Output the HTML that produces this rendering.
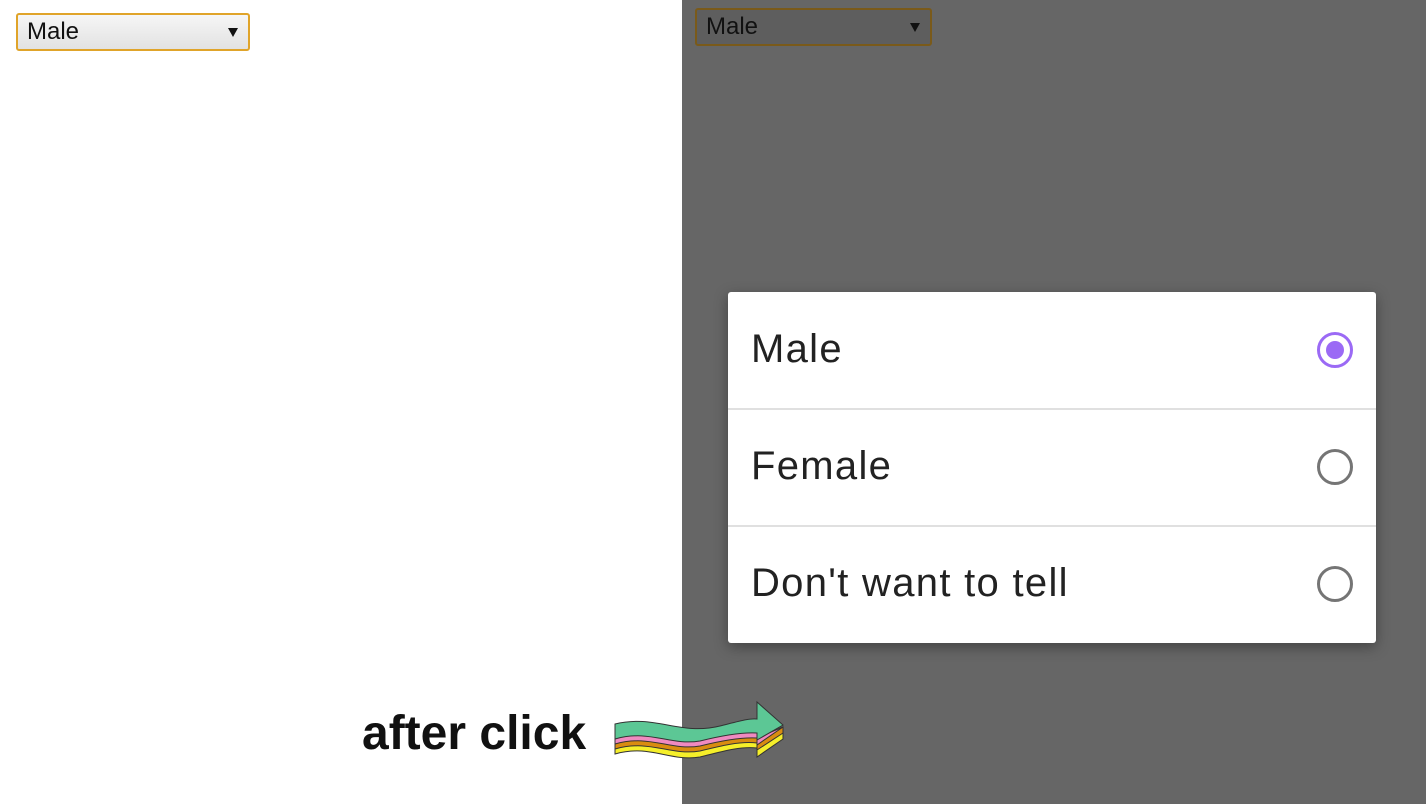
<!DOCTYPE html>
<html><head><style>
body{margin:0;width:1426px;height:804px;position:relative;background:#fff;font-family:"Liberation Sans",Roboto,sans-serif;overflow:hidden}
.sel{position:absolute;box-sizing:border-box;border:2px solid #e0a42a;border-radius:3px;background:linear-gradient(#f6f6f6,#e2e2e2);font-size:24px;color:#111}
.sel span{position:absolute;left:9px;top:3px}
.sel i{position:absolute;right:10px;top:13px;width:0;height:0;border-left:5px solid transparent;border-right:5px solid transparent;border-top:9px solid #111}
#gray{position:absolute;left:682px;top:0;width:744px;height:804px;background:#666}
#dlg{position:absolute;left:728px;top:292px;width:648px;height:351px;background:#fff;border-radius:3px;box-shadow:0 4px 14px rgba(0,0,0,.35)}
.row{position:absolute;left:0;width:648px;height:117px;font-size:40px;letter-spacing:1.3px;color:#222}
.row span{position:absolute;left:23px;top:35px}
.row .r{position:absolute;left:589px;top:40px;width:30px;height:30px;border:3px solid #757575;border-radius:50%}
.hr{position:absolute;left:0;width:648px;height:2px;background:#e0e0e0}
</style></head><body>
<div class="sel" style="left:16px;top:13px;width:234px;height:38px"><span>Male</span><i></i></div>
<div id="gray">
<div class="sel" style="left:13px;top:8px;width:237px;height:38px;background:#5e5e5e;border-color:#7a5a1a"><span>Male</span><i></i></div>
</div>
<div id="dlg">
<div class="row" style="top:0"><span>Male</span><div class="r" style="border-color:#9b6af5"><div style="position:absolute;left:6px;top:6px;width:18px;height:18px;border-radius:50%;background:#9b6af5"></div></div></div>
<div class="hr" style="top:116px"></div>
<div class="row" style="top:117px"><span>Female</span><div class="r"></div></div>
<div class="hr" style="top:233px"></div>
<div class="row" style="top:234px"><span>Don't want to tell</span><div class="r"></div></div>
</div>
<div style="position:absolute;left:362px;top:706px;font-size:48px;font-weight:bold;color:#111;font-family:'Liberation Sans',sans-serif">after click</div>
<svg style="position:absolute;left:0;top:0" width="1426" height="804">
<g stroke="#333" stroke-width="1">
<path d="M615 740 C655 730 680 752 720 742 C740 737 750 733 757 735 L757 757 L783 739 L783 731 L757 748 C740 746 720 752 700 757 C670 762 650 744 615 754 Z" fill="#f5ef2a"/>
<path d="M615 735 C655 725 680 747 720 737 C740 732 750 729 757 730 L757 750 L783 733 L783 727 L757 743 C740 741 720 746 700 751 C670 756 650 739 615 749 Z" fill="#d98c10"/>
<path d="M615 731 C655 721 680 743 720 733 C740 728 750 725 757 726 L757 745 L783 727 L757 738 C740 737 720 741 700 746 C670 751 650 734 615 744 Z" fill="#f08ac0"/>
<path d="M615 724 C655 714 680 736 720 726 C740 721 750 718 757 719 L757 702 L783 725 L757 740 L757 733 C740 732 720 736 700 741 C670 746 650 729 615 739 Z" fill="#5cc795"/>
</g></svg>
</body></html>
